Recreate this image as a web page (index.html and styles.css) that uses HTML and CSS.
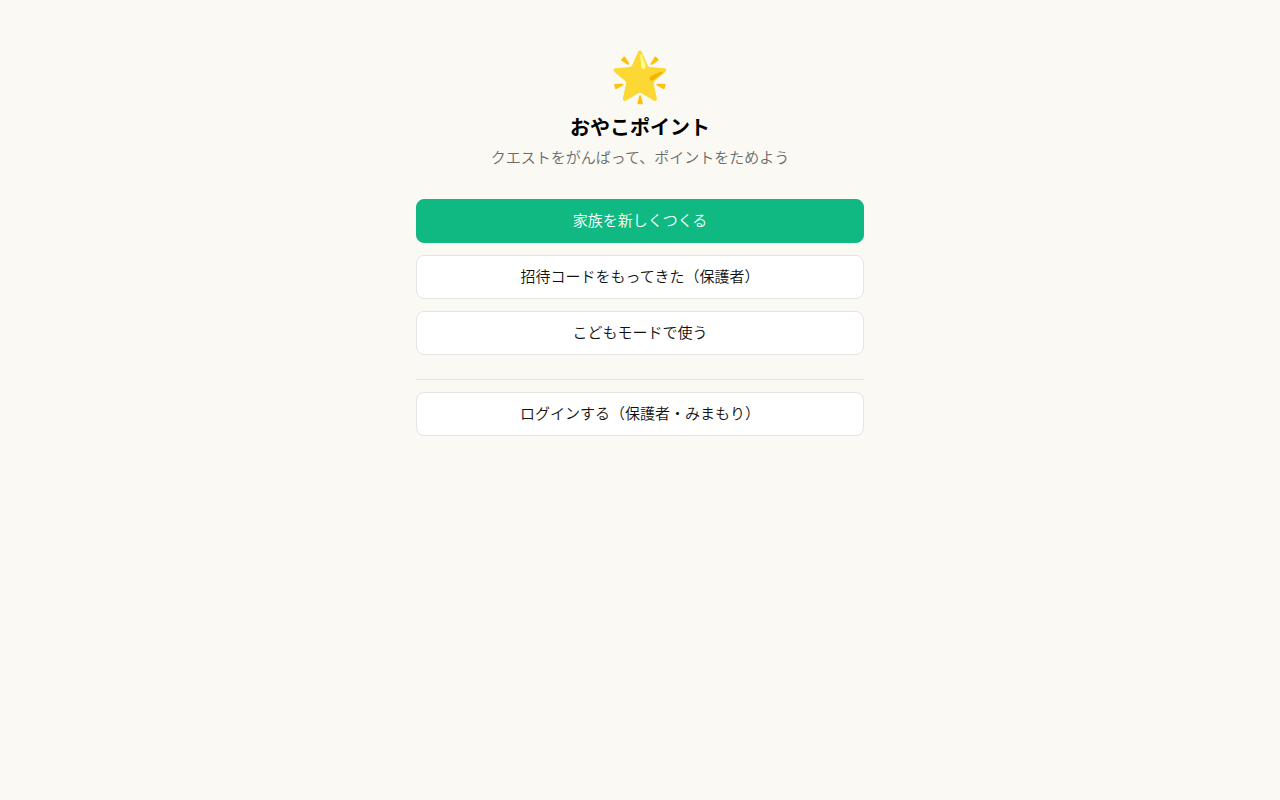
FILE: index.html
```html
<!DOCTYPE html>
<html lang="ja">
<head>
    <meta charset="UTF-8">
    <meta name="viewport" content="width=device-width, initial-scale=1.0">
    <title>おやこポイント</title>
    <link rel="stylesheet" href="styles.css">
</head>
<body>
    <main class="container">
        <header class="hero">
            <div class="logo">🌟</div>
            <h1>おやこポイント</h1>
            <p class="muted">クエストをがんばって、ポイントをためよう</p>
        </header>
        <div class="actions">
            <button type="button" class="btn btn-primary">家族を新しくつくる</button>
            <button type="button" class="btn">招待コードをもってきた（保護者）</button>
            <button type="button" class="btn">こどもモードで使う</button>
        </div>
        <div class="login">
            <button type="button" class="btn">ログインする（保護者・みまもり）</button>
        </div>
    </main>
</body>
</html>
```
FILE: styles.css
```css
* {
    box-sizing: border-box;
}

body {
    margin: 0;
    background-color: #faf9f4;
    color: #000;
    font-family: "Liberation Sans", "Noto Sans CJK JP", sans-serif;
    font-size: 15px;
    font-weight: 350;
    line-height: 24px;
}

.container {
    max-width: 480px;
    margin: 0 auto;
    padding: 40px 16px;
}

.hero {
    text-align: center;
    margin-bottom: 29px;
}

.logo {
    font-size: 48px;
    line-height: 74px;
}

h1 {
    margin: 0;
    font-size: 20px;
    font-weight: 600;
    line-height: 28px;
}

.muted {
    margin: 4px 0 0;
    color: #6b6b6b;
}

.actions {
    display: flex;
    flex-direction: column;
    gap: 12px;
}

.btn {
    width: 100%;
    padding: 10px 16px;
    border: 1px solid #e5e4e0;
    border-radius: 8px;
    background-color: #fff;
    color: #111;
    font: inherit;
    line-height: 22px;
    cursor: pointer;
}

.btn-primary {
    border-color: #10b981;
    background-color: #10b981;
    color: #fff;
}

.login {
    margin-top: 24px;
    padding-top: 12px;
    border-top: 1px solid #e5e4e0;
}
```
